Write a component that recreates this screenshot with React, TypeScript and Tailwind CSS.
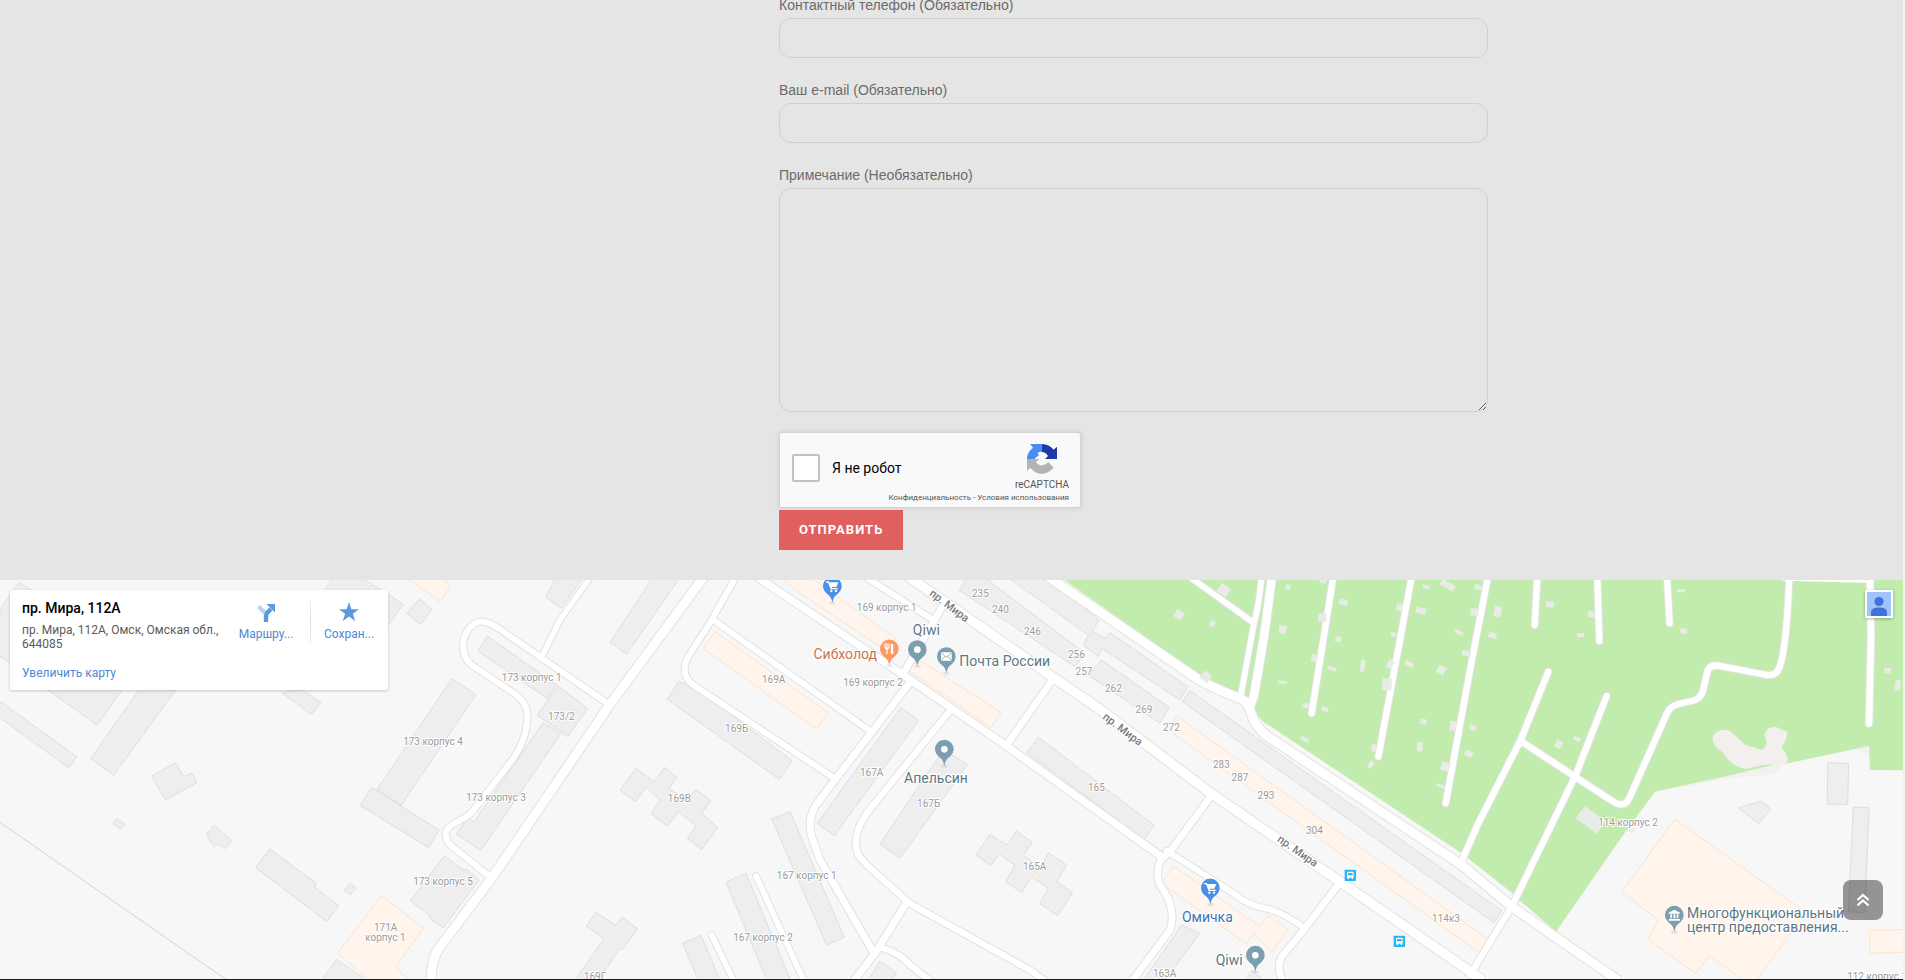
import React from "react";

type Sector = { x: number; shapes: string[] };
type RoadSector = { x: number; roads: [number, string][] };

// The map is drawn on a grid three times finer than the screen.
const buildings: Sector[] = [
  {
    x: 0,
    shapes: [
      "57,38 0,118 -5,255 292,465 365,360 330,200",
      "-5,390 230,560 207,594 -5,440",
      "420,355 272,566 341,616 527,360",
      "1000,20 975,60 1165,165 1210,103 1080,20",
      "1258,87 1296,117 1262,164 1221,130",
      "848,370 935,434 962,398 900,355",
      "455,618 527,578 551,620 576,609 591,638 496,690",
      "339,762 351,746 374,762 361,777",
      "620,792 643,766 696,812 673,837 655,822 644,830 635,820",
      "809,837 949,940 945,952 1016,1007 981,1055 767,893",
      "1050,940 1068,955 1050,975 1033,960",
      "1356,326 1428,374 1204,705 1131,658",
      "1115,652 1317,780 1286,833 1080,706",
      "1333,858 1392,902 1400,898 1437,930 1330,1073 1288,1045 1290,1037 1231,992",
      "1010,1168 1100,1230 965,1230",
    ],
  },
  {
    x: 1200,
    shapes: [
      "470,20 436,80 485,115 550,20",
      "760,20 630,217 680,252 842,20",
      "262,198 470,345 441,385 233,243",
      "475,348 563,415 503,500 411,435",
      "430,458 482,492 242,842 168,792 203,745 222,755",
      "835,335 880,350 1177,572 1138,628 802,388",
      "708,595 762,635 795,592 830,622 806,655 860,690 888,658 932,692 905,730 953,773 905,838 862,806 888,767 836,725 802,767 753,731 780,690 739,652 706,695 660,660",
      "1115,747 1170,725 1333,1102 1280,1125",
      "978,936 1038,910 1172,1230 1100,1230",
      "848,1120 903,1096 960,1230 895,1230",
      "588,1027 646,1066 667,1041 713,1077 667,1138 660,1135 595,1230 525,1230 612,1106 559,1068",
    ],
  },
  {
    x: 2400,
    shapes: [
      "303,412 355,452 103,797 52,760",
      "430,540 503,583 300,865 240,822",
      "715,502 1062,765 1032,808 680,548",
      "570,793 620,825 650,783 697,817 670,857 722,890 745,848 800,885 770,935 818,968 773,1037 719,1000 745,955 694,920 665,968 617,935 645,885 598,852 572,887 527,855",
      "240,1173 290,1210 275,1230 205,1230",
      "505,20 477,60 825,290 855,250 550,20",
      "620,20 740,20 897,150 877,185 915,205 930,188 1163,350 1140,390 905,235 895,260 850,225 865,195",
      "905,270 1107,412 1080,460 865,315",
    ],
  },
  {
    x: 3300,
    shapes: [
      "270,362 1205,1022 1182,1058 247,395",
      "245,1065 300,1090 195,1230 130,1230",
      "455,1200 490,1230 440,1230",
    ],
  },
  {
    x: 4440,
    shapes: [
      "775,713 843,694 872,716 836,762",
      "1043,578 1106,580 1103,704 1042,702",
      "1120,712 1167,712 1155,1028 1105,1025",
    ],
  },
];

const shops: Sector[] = [
  { x: 0, shapes: ["1215,20 1320,95 1352,48 1320,20", "1145,977 1270,1075 1187,1190 1225,1230 1110,1230 1012,1150"] },
  { x: 1200, shapes: ["945,184 1283,428 1250,477 910,235"] },
  { x: 2400, shapes: ["30,20 288,207 262,245 0,70 -60,20", "355,268 603,428 573,472 325,300"] },
  {
    x: 3300,
    shapes: [
      "230,437 1170,1112 1143,1152 205,480",
      "220,888 480,1070 505,1037 565,1077 516,1145 465,1095 460,1090 438,1122 185,940",
    ],
  },
  {
    x: 4440,
    shapes: [
      "585,748 960,1015 955,1055 830,1230 790,1230 687,1157 648,1210 502,1107 535,1050 425,965",
      "1170,1082 1280,1078 1280,1147 1170,1150",
    ],
  },
];

const roadSectors: RoadSector[] = [
  {
    x: 1200,
    roads: [
      [18, "M622,400 L300,178 Q262,152 240,155 Q200,165 190,215 Q185,260 215,285 L345,372 Q390,405 381,455 Q378,510 340,565 L225,715 Q210,735 190,745 L160,762 Q120,785 150,824 L272,922"],
      [16, "M572,20 L480,150 L428,255"],
      [18, "M1008,20 L935,150 L868,255 Q840,300 868,335 L880,345 L1308,628"],
      [18, "M940,150 L1413,485"],
      [17, "M1068,918 L1215,1240"],
      [17, "M935,1095 L1005,1240"],
      [27, "M912,20 L632,400 L275,925 L120,1130 Q93,1165 93,1240"],
    ],
  },
  {
    x: 2400,
    roads: [
      [18, "M195,20 L400,150"],
      [20, "M430,105 L310,310"],
      [21, "M330,338 L108,625 L45,710 Q22,750 35,800 L60,870 L222,1150"],
      [20, "M758,328 L620,525"],
      [19, "M447,425 L200,730 Q152,800 175,855 L200,885 L290,965 Q320,995 350,1012 L690,1200 L750,1245"],
      [21, "M318,1000 L225,1150 L155,1240"],
      [19, "M250,1135 Q300,1150 330,1185 L400,1240"],
      [22, "M-130,20 L310,315 L615,525 L1085,860"],
      [28, "M325,20 L760,322 L900,418 L1230,668 L1620,935 L2040,1225"],
    ],
  },
  {
    x: 3300,
    roads: [
      [20, "M335,675 L210,845 L182,870 Q165,910 180,945 L205,985 Q225,1040 210,1080 L95,1235"],
      [18, "M200,842 L400,970 Q450,1010 510,1018 Q560,1035 615,1075"],
      [20, "M718,940 L615,1075 L545,1160 Q528,1190 548,1235"],
      [17, "M484,20 Q480,90 462,160 L420,390"],
      [17, "M268,20 L460,158"],
      [25, "M516,20 L492,200 L462,375 L450,410"],
      [19, "M700,20 L635,430"],
      [19, "M935,20 L885,290 L835,560"],
      [19, "M1164,20 L1112,290 L1037,700"],
      [27, "M-170,10 L290,325 Q330,350 420,385 Q445,395 454,430 Q465,470 500,497 L1085,885 L1235,1010 L1550,1228"],
    ],
  },
  {
    x: 4440,
    roads: [
      [19, "M172,20 L164,165"],
      [19, "M352,20 L358,213"],
      [19, "M561,20 L569,160"],
      [19, "M928,20 Q920,220 902,280 Q894,320 860,315 L715,287 Q688,284 682,305 L668,365 Q660,388 635,393 L595,402 Q568,410 560,432 L450,680 Q435,718 398,694 L125,515"],
      [19, "M205,305 L122,510 L-5,760 L-58,880"],
      [19, "M380,378 L285,620 L95,1010 L-30,1215"],
      [20, "M1170,20 L1173,200 L1167,460"],
    ],
  },
];

// Garden houses: centre x, centre y, width, height, rotation.
const huts: [number, number, number, number, number][] = [
  [3671, 60, 34, 30, 35], [3537, 134, 26, 26, 35], [3638, 161, 15, 18, 25], [3618, 320, 28, 28, 35],
  [3864, 52, 14, 14, 20], [3970, 34, 20, 12, 10], [4030, 96, 24, 18, 15], [3967, 143, 24, 26, 0],
  [3848, 178, 22, 24, 5], [4015, 208, 18, 16, 10], [3943, 264, 18, 22, 10], [3996, 296, 28, 10, 18],
  [4088, 287, 13, 36, 8], [3847, 337, 25, 10, 5], [3918, 407, 22, 14, 5], [3975, 418, 20, 12, 10],
  [3914, 508, 26, 12, 28], [4279, 51, 22, 11, 15], [4343, 46, 44, 18, 28], [4198, 112, 18, 22, 15],
  [4262, 122, 30, 18, 12], [4181, 194, 17, 13, 10], [4171, 282, 18, 26, 30], [4228, 282, 26, 14, 25],
  [4161, 343, 28, 36, 5], [4123, 534, 18, 22, 15], [4112, 584, 14, 22, 30], [4270, 455, 18, 16, 15],
  [4259, 530, 16, 28, 5], [4359, 468, 18, 28, 5], [4418, 473, 20, 16, 30], [4406, 551, 24, 18, 20],
  [4336, 590, 26, 26, 20], [4322, 648, 26, 9, 18], [4324, 300, 24, 24, 25], [4376, 187, 26, 11, 25],
  [4400, 250, 28, 16, 10], [4424, 126, 24, 22, 10], [4435, 52, 22, 14, 15], [4493, 125, 22, 32, 10],
  [4477, 196, 24, 18, 20], [4649, 103, 24, 18, 10], [4774, 133, 20, 18, 5], [4742, 195, 20, 12, 0],
  [5043, 62, 24, 10, 0], [5051, 183, 20, 15, 0], [4676, 523, 20, 24, 30], [4731, 507, 22, 12, 25],
  [5663, 302, 20, 16, 0], [5693, 347, 16, 32, 8],
];

const numbers: [number, number, string][] = [
  [1299, 525, "173 корпус 4"], [1595, 333, "173 корпус 1"], [1684, 450, "173/2"], [1488, 693, "173 корпус 3"],
  [1329, 945, "173 корпус 5"], [1157, 1083, "171А"], [1156, 1113, "корпус 1"], [2321, 339, "169А"],
  [2210, 486, "169Б"], [2038, 696, "169В"], [2420, 927, "167 корпус 1"], [2289, 1113, "167 корпус 2"],
  [1785, 1231, "169Г"], [2660, 123, "169 корпус 1"], [2619, 348, "169 корпус 2"], [2615, 618, "167А"],
  [2786, 711, "167Б"], [3289, 663, "165"], [3104, 900, "165А"], [2941, 81, "235"], [3001, 129, "240"],
  [3097, 195, "246"], [3229, 264, "256"], [3252, 315, "257"], [3340, 366, "262"], [3432, 429, "269"],
  [3514, 483, "272"], [3664, 593, "283"], [3720, 633, "287"], [3798, 687, "293"], [3943, 792, "304"],
  [4338, 1056, "114к3"], [3494, 1221, "163А"], [4884, 768, "114 корпус 2"], [5631, 1231, "112 корпус 1"],
];

const streets: [number, number, number][] = [[2848, 118, 37], [3368, 489, 37], [3893, 854, 35]];

const stops: [number, number][] = [[4051, 916], [4198, 1114]];

function Pin({ x, y, color, children }: { x: number; y: number; color: string; children?: React.ReactNode }) {
  return (
    <g transform={`translate(${x} ${y})`}>
      <ellipse cx="0" cy="50" rx="10" ry="5" fill="#000" opacity=".08" />
      <path d="M0,50 C-3,32 -9,28 -18,21 A28,28 0 1 1 18,21 C9,28 3,32 0,50Z" fill={color} />
      {children ?? <circle r="10" fill="#fff" />}
    </g>
  );
}

const Cart = () => (
  <g fill="#fff">
    <path d="M-19,-15 h9 l9,20 h17 v4 h-21 l-8,-20 h-6z" />
    <path d="M-11,-12 H18 L12,2 H-5Z" />
    <circle cx="-3" cy="14" r="3.5" />
    <circle cx="11" cy="14" r="3.5" />
  </g>
);

function Polys({ data, fill, stroke }: { data: Sector[]; fill: string; stroke: string }) {
  return (
    <>
      {data.map((s) => (
        <g key={s.x} transform={`translate(${s.x} 0)`} fill={fill} stroke={stroke} strokeWidth="3">
          {s.shapes.map((p) => (
            <polygon key={p} points={p} />
          ))}
        </g>
      ))}
    </>
  );
}

function Roads({ extra, color }: { extra: number; color: string }) {
  return (
    <>
      {roadSectors.map((s) => (
        <g key={s.x} transform={`translate(${s.x} 0)`} fill="none" stroke={color} strokeLinecap="round" strokeLinejoin="round">
          {s.roads.map(([w, d]) => (
            <path key={d} d={d} strokeWidth={w + extra} />
          ))}
        </g>
      ))}
    </>
  );
}

function CityMap() {
  return (
    <svg
      className="block h-full w-full font-[Roboto,sans-serif]"
      viewBox="0 30 5709 1197"
      preserveAspectRatio="xMidYMid slice"
      role="img"
      aria-label="Карта"
    >
      <rect x="-3000" y="-1000" width="12000" height="4000" fill="#f7f7f7" />
      <path d="M0,757 L680,1230" stroke="#d2d2d2" strokeWidth="3" />
      <g transform="translate(4440 0)">
        <path
          d="M-1260,20 L-850,310 L-710,390 L-650,455 L-55,850 L100,972 L120,992 L228,1085 L440,780 L525,665 L1167,528 L1170,600 L1280,601 L1280,20Z"
          fill="#c1ecae"
        />
        <path d="M525,665 L700,628 L920,575 L880,613 L750,625 L560,660Z" fill="#f3f0f0" />
        <path d="M1125,537 L1167,528 L1167,557Z" fill="#f3efef" />
        <path
          d="M700,495 Q718,475 748,482 Q772,500 795,524 L845,540 Q870,525 853,497 Q862,465 890,472 L922,485 Q925,500 905,533 Q930,560 920,580 L885,584 Q850,582 800,597 Q755,592 728,547 Q688,522 700,495Z"
          fill="#f3efef"
        />
      </g>
      <Polys data={buildings} fill="#eeeeee" stroke="#dedede" />
      <Polys data={shops} fill="#fff5ec" stroke="#fce4cc" />
      <Roads extra={6} color="#e2e2e2" />
      <Roads extra={0} color="#ffffff" />
      <path d="M5345,28 L5620,35" stroke="#fff" strokeWidth="8" />
      <g fill="#e9ebe7">
        {huts.map(([x, y, w, h, r]) => (
          <rect key={`${x}-${y}`} x={x - w / 2} y={y - h / 2} width={w} height={h} transform={`rotate(${r} ${x} ${y})`} />
        ))}
        <polygon points="4755,708 4815,752 4792,792 4727,745" />
        <polygon points="4880,780 4895,788 4910,772" />
      </g>

      <g fontSize="30" fill="#9a9a9a" stroke="#fff" strokeWidth="6" strokeLinejoin="round" paintOrder="stroke" textAnchor="middle">
        {numbers.map(([x, y, t]) => (
          <text key={t + x} x={x} y={y}>
            {t}
          </text>
        ))}
      </g>
      <g fontSize="33" fontWeight="500" fill="#7a7a7a" stroke="#fff" strokeWidth="6" paintOrder="stroke" textAnchor="middle">
        {streets.map(([x, y, r]) => (
          <text key={x} x={x} y={y} transform={`rotate(${r} ${x} ${y - 11})`}>
            пр. Мира
          </text>
        ))}
      </g>

      {stops.map(([x, y]) => (
        <g key={x} transform={`translate(${x} ${y})`}>
          <rect x="-17" y="-17" width="34" height="34" rx="2" fill="#29b6f6" />
          <path d="M-10,-8 Q-10,-11 -7,-11 H7 Q10,-11 10,-8 V7 H-10Z" fill="#fff" />
          <rect x="-7" y="-7" width="14" height="7" fill="#29b6f6" />
          <path d="M-8,6 h4 v5 h-4z M4,6 h4 v5 h-4z" fill="#fff" />
        </g>
      ))}

      <Pin x={2497} y={49} color="#4a90ea"><Cart /></Pin>
      <Pin x={3631} y={954} color="#4a90ea"><Cart /></Pin>
      <Pin x={2668} y={237} color="#fd9a64">
        <g fill="none" stroke="#fff" strokeWidth="3.5">
          <path d="M-13,-17 V-7 Q-13,-1 -7,-1 Q-1,-1 -1,-7 V-17 M-7,-17 V15" />
          <path d="M8,15 V-15" strokeWidth="7" />
        </g>
      </Pin>
      <Pin x={2752} y={239} color="#7b9eb0" />
      <Pin x={2839} y={260} color="#7b9eb0">
        <rect x="-16" y="-13" width="32" height="25" rx="2" fill="#fff" />
        <path d="M-15,-11 L0,2 L15,-11 M-15,11 L-4,-1 M15,11 L4,-1" fill="none" stroke="#7b9eb0" strokeWidth="2.5" />
      </Pin>
      <Pin x={2833} y={538} color="#7b9eb0" />
      <Pin x={3766} y={1156} color="#7b9eb0" />
      <Pin x={5023} y={1036} color="#7b9eb0">
        <path d="M-17,-8 L0,-17 L17,-8 V-5 H-17Z M-12,-3 h5 v12 h-5z M-3,-3 h6 v12 h-6z M7,-3 h5 v12 h-5z M-17,11 h34 v5 h-34z" fill="#fff" />
      </Pin>

      <g fontSize="42" fill="#5c7784" stroke="#fff" strokeWidth="7" strokeLinejoin="round" paintOrder="stroke">
        <text x="2779" y="195" textAnchor="middle">Qiwi</text>
        <text x="2631" y="267" textAnchor="end" fill="#c97450">Сибхолод</text>
        <text x="2878" y="288">Почта России</text>
        <text x="2808" y="640" textAnchor="middle">Апельсин</text>
        <text x="3622" y="1056" textAnchor="middle" fill="#4272b8">Омичка</text>
        <text x="3728" y="1185" textAnchor="end">Qiwi</text>
        <text x="5061" y="1044">Многофункциональный</text>
        <text x="5061" y="1086">центр предоставления...</text>
      </g>
    </svg>
  );
}

function PlaceCard() {
  return (
    <div className="absolute top-2.5 left-2.5 flex h-[100px] w-[378px] rounded-xs bg-white pt-2.5 pl-3 font-[Roboto,sans-serif] text-xs shadow-[0_1px_3px_rgba(0,0,0,0.2)]">
      <div className="w-[208px] shrink-0">
        <h2 className="text-sm leading-4 font-medium text-black">пр. Мира, 112А</h2>
        <p className="mt-[7px] leading-[14px] text-[#5b5b5b]">пр. Мира, 112А, Омск, Омская обл., 644085</p>
        <a href="#map" className="mt-[15px] block leading-[14px] text-[#4a8ad4]">Увеличить карту</a>
      </div>
      <a href="#route" className="flex w-[72px] flex-col items-center pt-1 text-[#4a8ad4]">
        <svg viewBox="0 0 18 18" className="size-[18px]">
          <path d="M1.5,2.5 L8,9" stroke="#b9d3f3" strokeWidth="4" />
          <path d="M9,18 V12 Q9,10 10.5,8.5 L14,5" fill="none" stroke="#5c98e0" strokeWidth="4.4" />
          <path d="M9.5,0 H18 V8.5Z" fill="#5c98e0" />
        </svg>
        <span className="mt-[5px] leading-[14px]">Маршру...</span>
      </a>
      <div className="ml-2 h-[44px] w-px bg-gradient-to-b from-[#f2f2f2] via-[#dadada] to-[#f2f2f2]" />
      <a href="#save" className="flex w-[76px] flex-col items-center pt-0.5 text-[#4a8ad4]">
        <svg viewBox="0 0 20 20" className="size-5" fill="#5c98e0">
          <path d="M10,0 L12.4,7.2 H20 L13.9,11.7 L16.2,19 L10,14.6 L3.8,19 L6.1,11.7 L0,7.2 H7.6Z" />
        </svg>
        <span className="mt-[5px] leading-[14px]">Сохран...</span>
      </a>
    </div>
  );
}

function Captcha() {
  return (
    <div className="flex h-[76px] w-[302px] rounded-[3px] border border-[#d3d3d3] bg-[#f9f9f9] font-[Roboto,sans-serif] shadow-[0_0_4px_1px_rgba(0,0,0,0.08)]">
      <label className="flex h-[70px] w-[106px] items-center gap-3 pl-3 text-sm whitespace-nowrap text-black">
        <input type="checkbox" className="size-7 shrink-0 appearance-none rounded-xs border-2 border-[#c1c1c1] bg-white" />
        Я не робот
      </label>
      <div className="ml-auto flex shrink-0 flex-col items-end pt-[11px] pr-[11px] text-[#555]">
        <svg viewBox="0 0 90 90" className="mr-3 size-[30px]">
          <path d="M0,45 V40 Q3,22 18,11 L9,0 H45 V24 Q36,22 31,28 L36,33 Q30,38 22,45Z" fill="#4a8df2" />
          <path d="M45,0 Q66,1 80,17 L90,8 V45 H54 L63,36 Q56,24 45,24Z" fill="#1c3aa9" />
          <path d="M0,45 H37 L27,54 Q36,68 50,63 Q60,59 64,54 L80,71 Q63,90 42,89 Q22,87 10,71 L0,81Z" fill="#b3b3b3" />
        </svg>
        <span className="mt-[5px] text-[10px] leading-3">reCAPTCHA</span>
        <span className="mt-0.5 text-[8px] leading-[10px] whitespace-nowrap">
          <a href="#privacy">Конфиденциальность</a> - <a href="#terms">Условия использования</a>
        </span>
      </div>
    </div>
  );
}

const field = "block w-full rounded-xl border border-[#d0d0d0] bg-transparent px-4 text-sm text-[#555] outline-none";
const caption = "block text-sm leading-[26px] text-[#6b6b6b]";

export default function App() {
  return (
    <div className="bg-[#f2f2f2] pr-0.5 font-['Liberation_Sans',Arial,sans-serif]">
      <section className="flex justify-center overflow-hidden bg-[#e5e5e5] pb-[30px]">
        <div className="-mt-2 flex w-full max-w-[1169px] justify-end pr-12">
          <form className="w-full max-w-[709px]" onSubmit={(e) => e.preventDefault()}>
            <div className="mb-[19px]">
              <label htmlFor="phone" className={caption}>Контактный телефон (Обязательно)</label>
              <input id="phone" type="tel" className={`${field} h-10`} />
            </div>
            <div className="mb-[19px]">
              <label htmlFor="email" className={caption}>Ваш e-mail (Обязательно)</label>
              <input id="email" type="email" className={`${field} h-10`} />
            </div>
            <div className="mb-5">
              <label htmlFor="note" className={caption}>Примечание (Необязательно)</label>
              <textarea id="note" className={`${field} h-56 resize py-3`} />
            </div>
            <Captcha />
            <button
              type="submit"
              className="mt-0.5 block h-10 bg-[#e05f5f] px-5 font-[Roboto,sans-serif] text-[13px] font-bold tracking-[1px] text-white uppercase"
            >
              Отправить
            </button>
          </form>
        </div>
      </section>

      <section id="map" className="relative h-[399px] overflow-hidden">
        <CityMap />
        <PlaceCard />
        <button type="button" aria-label="Аккаунт" className="absolute top-2.5 right-2.5 size-7 bg-white p-0.5 shadow-[0_1px_3px_rgba(0,0,0,0.3)]">
          <svg viewBox="0 0 24 24" className="block size-6">
            <rect width="24" height="24" fill="#a1c2fa" />
            <circle cx="12" cy="9.5" r="4.6" fill="#3f72dd" />
            <path d="M4,24 V20 Q4,15.5 12,15.5 Q20,15.5 20,20 V24Z" fill="#3f72dd" />
          </svg>
        </button>
      </section>
      <div className="h-px bg-[#1f1f1f]" />

      <button
        type="button"
        aria-label="Наверх"
        className="fixed right-[22px] bottom-[60px] flex size-10 items-center justify-center rounded-lg bg-black/40"
      >
        <svg viewBox="0 0 14 14" className="size-3.5" fill="none" stroke="#fff" strokeWidth="2.2">
          <path d="M1.5,7 L7,2 L12.5,7 M1.5,12.5 L7,7.5 L12.5,12.5" />
        </svg>
      </button>
    </div>
  );
}
